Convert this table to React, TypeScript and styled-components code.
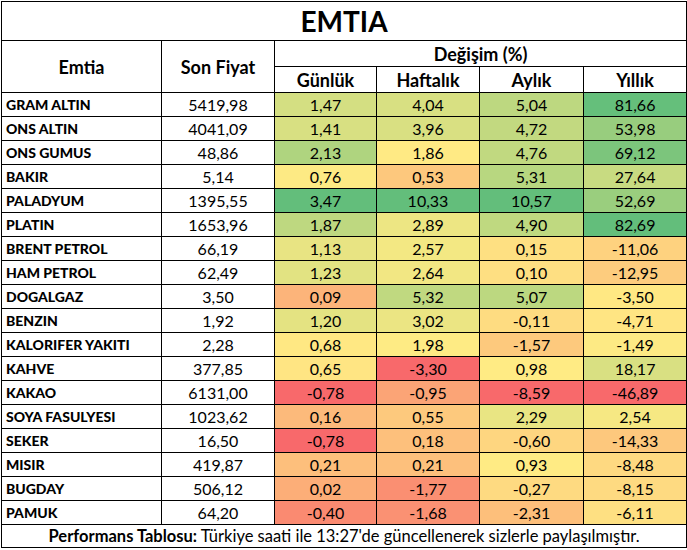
import styled, { createGlobalStyle } from "styled-components";

const GlobalStyle = createGlobalStyle`
  body {
    margin: 0;
    background: white;
    font-family: Lato, "Open Sans", sans-serif;
    color: #000;
  }
`;

const Wrap = styled.div`
  padding: 1px;
`;

const Table = styled.table`
  width: 685px;
  table-layout: fixed;
  border-collapse: collapse;
  border: 1px solid #000;
  td,
  th {
    border: 1px solid #000;
    padding: 0;
  }
`;

const TitleCell = styled.th`
  height: 38px;
  font-size: 28px;
  font-weight: 700;
  text-align: center;
`;

const HeadCell = styled.th<{ $tall?: boolean }>`
  height: ${(p) => (p.$tall ? "51px" : "25px")};
  font-size: 18px;
  line-height: 22px;
  font-weight: 700;
  text-align: center;
  vertical-align: middle;
`;

const NameCell = styled.td`
  height: 23px;
  font-size: 14px;
  font-weight: 900;
  padding-left: 4px !important;
  white-space: nowrap;
`;

const NumCell = styled.td`
  height: 23px;
  font-size: 16px;
  line-height: 20px;
  text-align: center;
`;

const Footer = styled.td`
  height: 22px;
  font-size: 16.5px;
  line-height: 20px;
  text-align: center;
  white-space: nowrap;
  b {
    font-weight: 700;
  }
`;

type Row = [string, string, string, string, string, string];

const rows: Row[] = [
  ["GRAM ALTIN", "5419,98", "1,47", "4,04", "5,04", "81,66"],
  ["ONS ALTIN", "4041,09", "1,41", "3,96", "4,72", "53,98"],
  ["ONS GUMUS", "48,86", "2,13", "1,86", "4,76", "69,12"],
  ["BAKIR", "5,14", "0,76", "0,53", "5,31", "27,64"],
  ["PALADYUM", "1395,55", "3,47", "10,33", "10,57", "52,69"],
  ["PLATIN", "1653,96", "1,87", "2,89", "4,90", "82,69"],
  ["BRENT PETROL", "66,19", "1,13", "2,57", "0,15", "-11,06"],
  ["HAM PETROL", "62,49", "1,23", "2,64", "0,10", "-12,95"],
  ["DOGALGAZ", "3,50", "0,09", "5,32", "5,07", "-3,50"],
  ["BENZIN", "1,92", "1,20", "3,02", "-0,11", "-4,71"],
  ["KALORIFER YAKITI", "2,28", "0,68", "1,98", "-1,57", "-1,49"],
  ["KAHVE", "377,85", "0,65", "-3,30", "0,98", "18,17"],
  ["KAKAO", "6131,00", "-0,78", "-0,95", "-8,59", "-46,89"],
  ["SOYA FASULYESI", "1023,62", "0,16", "0,55", "2,29", "2,54"],
  ["SEKER", "16,50", "-0,78", "0,18", "-0,60", "-14,33"],
  ["MISIR", "419,87", "0,21", "0,21", "0,93", "-8,48"],
  ["BUGDAY", "506,12", "0,02", "-1,77", "-0,27", "-8,15"],
  ["PAMUK", "64,20", "-0,40", "-1,68", "-2,31", "-6,11"],
];

const num = (s: string) => parseFloat(s.replace(",", "."));

const RED = [248, 105, 107];
const YELLOW = [255, 235, 132];
const GREEN = [99, 190, 123];

const mix = (a: number[], b: number[], t: number) =>
  `rgb(${a.map((v, i) => Math.round(v + (b[i] - v) * t)).join(",")})`;

// excel style 3-colour scale, mid point = 50th percentile
const scale = (col: number) => {
  const vals = rows.map((r) => num(r[col]));
  const sorted = [...vals].sort((a, b) => a - b);
  const min = sorted[0];
  const max = sorted[sorted.length - 1];
  const pos = (sorted.length - 1) * 0.5;
  const lo = Math.floor(pos);
  const mid = sorted[lo] + (sorted[Math.ceil(pos)] - sorted[lo]) * (pos - lo);
  return (v: number) =>
    v <= mid
      ? mix(RED, YELLOW, (v - min) / (mid - min || 1))
      : mix(YELLOW, GREEN, (v - mid) / (max - mid || 1));
};

const scales = [2, 3, 4, 5].map(scale);

const App = () => {
  return (
    <Wrap>
      <GlobalStyle />
      <Table>
        <colgroup>
          <col style={{ width: 160 }} />
          <col style={{ width: 113 }} />
          <col style={{ width: 102 }} />
          <col style={{ width: 103 }} />
          <col style={{ width: 104 }} />
          <col style={{ width: 103 }} />
        </colgroup>
        <thead>
          <tr>
            <TitleCell colSpan={6}>EMTIA</TitleCell>
          </tr>
          <tr>
            <HeadCell rowSpan={2} $tall>
              Emtia
            </HeadCell>
            <HeadCell rowSpan={2} $tall>
              Son Fiyat
            </HeadCell>
            <HeadCell colSpan={4}>Değişim (%)</HeadCell>
          </tr>
          <tr>
            <HeadCell>Günlük</HeadCell>
            <HeadCell>Haftalık</HeadCell>
            <HeadCell>Aylık</HeadCell>
            <HeadCell>Yıllık</HeadCell>
          </tr>
        </thead>
        <tbody>
          {rows.map((r) => (
            <tr key={r[0]}>
              <NameCell>{r[0]}</NameCell>
              <NumCell>{r[1]}</NumCell>
              {[2, 3, 4, 5].map((c, i) => (
                <NumCell key={c} style={{ background: scales[i](num(r[c])) }}>
                  {r[c]}
                </NumCell>
              ))}
            </tr>
          ))}
          <tr>
            <Footer colSpan={6}>
              <b>Performans Tablosu:</b> Türkiye saati ile 13:27'de
              güncellenerek sizlerle paylaşılmıştır.
            </Footer>
          </tr>
        </tbody>
      </Table>
    </Wrap>
  );
};

export default App;
